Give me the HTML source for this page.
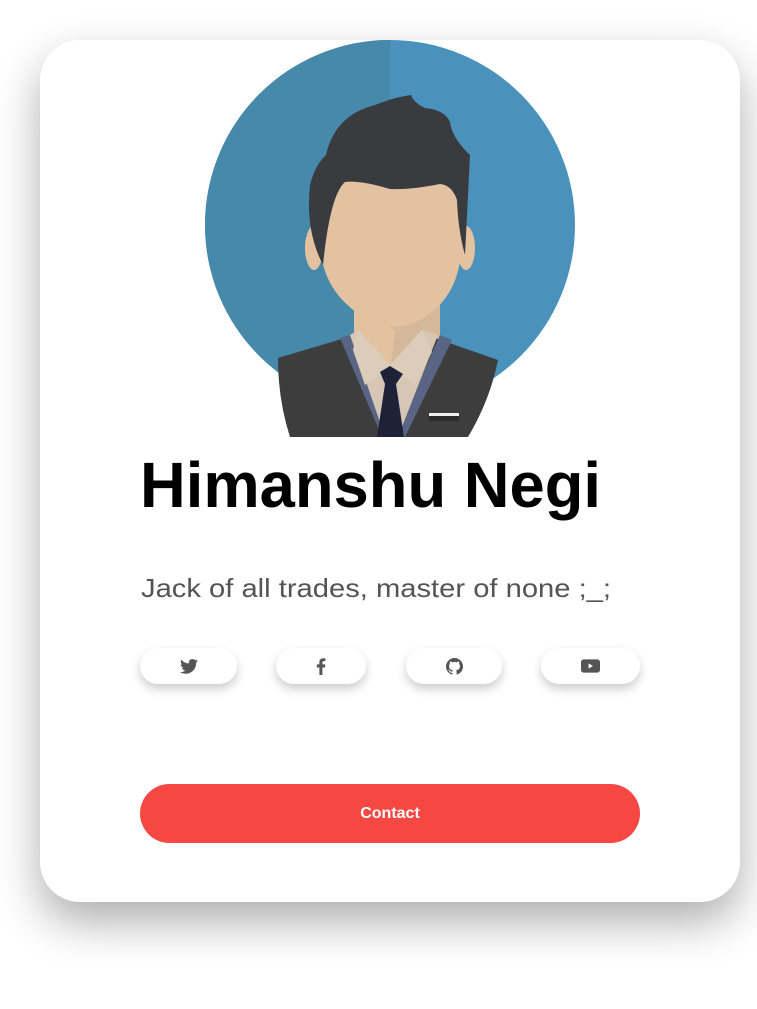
<!DOCTYPE html>
<html><head><meta charset="utf-8"><style>
html,body{margin:0;padding:0;background:#fff;width:757px;height:1009px;overflow:hidden;position:relative;font-family:"Liberation Sans",sans-serif}
.card{position:absolute;left:40px;top:40px;width:700px;height:862px;border-radius:40px;background:#fff;box-shadow:0 20px 45px rgba(0,0,0,.32)}
.btn{position:absolute;top:648px;height:36px;border-radius:18px;background:#fff;box-shadow:0 5px 10px rgba(0,0,0,.2);display:flex;align-items:center;justify-content:center}
.contact{position:absolute;left:140px;top:784px;width:500px;height:59px;border-radius:30px;background:#f64843;color:#fff;font-weight:bold;font-size:16px;display:flex;align-items:center;justify-content:center}
svg.t{position:absolute;left:0;top:0}
</style></head><body>
<div class="card"></div>
<svg class="t" width="757" height="1009" viewBox="0 0 757 1009">
<defs><clipPath id="c"><rect x="200" y="38" width="380" height="399"/></clipPath></defs>
<g clip-path="url(#c)">
<circle cx="390" cy="225" r="185" fill="#4a92bc"/>
<path d="M390 40 A185 185 0 0 0 390 410 Z" fill="#4789aa"/>
<path d="M354 300 L354 345 L390 380 L440 345 L440 300 Z" fill="#d5b79a"/>
<path d="M354 310 L354 345 L390 375 L395 330 Z" fill="#e2c2a0"/>
<ellipse cx="314" cy="248" rx="9" ry="22" fill="#e2c2a0"/>
<ellipse cx="466" cy="248" rx="9" ry="22" fill="#e2c2a0"/>
<path d="M322 190 Q330 165 360 165 Q400 160 440 165 Q462 175 460 215 L460 260 Q455 300 420 320 Q395 333 372 322 Q330 300 322 260 Z" fill="#e2c2a0"/>
<path d="M326 155 Q335 115 375 105 Q395 97 411 95 Q414 103 425 108 Q445 110 450 122 Q452 138 470 155 L465 255 Q458 230 457 200 Q452 185 440 184 Q410 190 390 189 Q360 180 345 182 Q330 195 323 265 Q305 230 310 185 Q315 165 326 155 Z" fill="#3a3b3f"/>
<path d="M278 358 L345 338 L390 437 L435 338 L498 360 Q490 400 468 437 L290 437 Q278 400 278 358 Z" fill="#3c3d3c"/>
<path d="M340 338 L350 335 L395 437 L382 437 Z M440 335 L452 340 L405 437 L395 437 Z" fill="#5a6586"/>
<path d="M350 335 L358 330 L390 365 L422 330 L438 335 L398 437 L385 437 Z" fill="#d5c6b5"/>
<path d="M358 330 L353 350 L365 385 L390 368 L415 385 L432 352 L422 330 L390 365 Z" fill="#dccdbb"/>
<path d="M380 372 L390 366 L403 374 L396 384 L404 437 L377 437 L385 384 Z" fill="#1e2239"/>
<rect x="429" y="413" width="30" height="3" fill="#eee"/>
<rect x="429" y="416" width="30" height="5" fill="#2a2a2a"/>
</g>
<text x="140" y="507" font-family="Liberation Sans, sans-serif" font-weight="bold" font-size="64" textLength="461" lengthAdjust="spacingAndGlyphs" fill="#000">Himanshu Negi</text>
<text x="141" y="597" font-family="Liberation Sans, sans-serif" font-size="26" textLength="470" lengthAdjust="spacingAndGlyphs" fill="#555">Jack of all trades, master of none ;_;</text>
</svg>
<div class="btn" style="left:140px;width:97px"><svg width="18" height="15" viewBox="0 0 24 20"><path fill="#555" d="M24 2.4c-.9.4-1.8.7-2.8.8 1-.6 1.8-1.600 2.2-2.7-1 .6-2 1-3.1 1.2C19.4.7 18.1 0 16.6 0c-2.7 0-4.9 2.200-4.9 4.9 0 .4 0 .8.1 1.1C7.7 5.8 4.1 3.9 1.700.9c-.4.7-.7 1.600-.7 2.5 0 1.700.9 3.200 2.2 4.1-.8 0-1.600-.2-2.2-.6v.1c0 2.400 1.700 4.400 3.9 4.8-.4.1-.8.2-1.3.2-.3 0-.6 0-.9-.1.6 2 2.400 3.400 4.600 3.400-1.700 1.300-3.800 2.100-6.100 2.100-.4 0-.8 0-1.200-.1C2.200 18.800 4.800 19.600 7.500 19.600c9.100 0 14-7.500 14-14v-.6c1-.7 1.800-1.600 2.500-2.600z"/></svg></div>
<div class="btn" style="left:276px;width:90px"><svg width="10" height="17" viewBox="0 0 10 18"><path fill="#555" d="M6.5 18V10h2.7l.4-3.2H6.5V4.8c0-.9.3-1.5 1.6-1.5H9.7V.4C9.4.3 8.4.2 7.3.2 4.9.2 3.3 1.7 3.3 4.3v2.5H.6V10h2.7v8z"/></svg></div>
<div class="btn" style="left:406px;width:96px"><svg width="17" height="17" viewBox="0 0 16 16"><path fill="#555" d="M8 0C3.6 0 0 3.6 0 8c0 3.5 2.3 6.5 5.5 7.6.4.1.5-.2.5-.4v-1.4c-2.2.5-2.7-1-2.7-1-.4-.9-.9-1.2-.9-1.2-.7-.5.1-.5.1-.5.8.1 1.2.8 1.2.8.7 1.2 1.9.9 2.3.7.1-.5.3-.9.5-1.1-1.8-.2-3.6-.9-3.6-4 0-.9.3-1.6.8-2.1-.1-.2-.4-1 .1-2.1 0 0 .7-.2 2.2.8.6-.2 1.3-.3 2-.3s1.4.1 2 .3c1.5-1 2.2-.8 2.2-.8.4 1.1.2 1.9.1 2.1.5.6.8 1.3.8 2.1 0 3.1-1.9 3.7-3.6 3.9.3.3.5.8.5 1.5v2.2c0 .2.1.5.6.4C13.7 14.5 16 11.5 16 8c0-4.4-3.6-8-8-8z"/></svg></div>
<div class="btn" style="left:541px;width:99px"><svg width="19" height="14" viewBox="0 0 20 14"><rect width="20" height="14" rx="3" fill="#555"/><path d="M8 4.2v5.6L12.5 7z" fill="#fff"/></svg></div>
<div class="contact">Contact</div>
</body></html>
